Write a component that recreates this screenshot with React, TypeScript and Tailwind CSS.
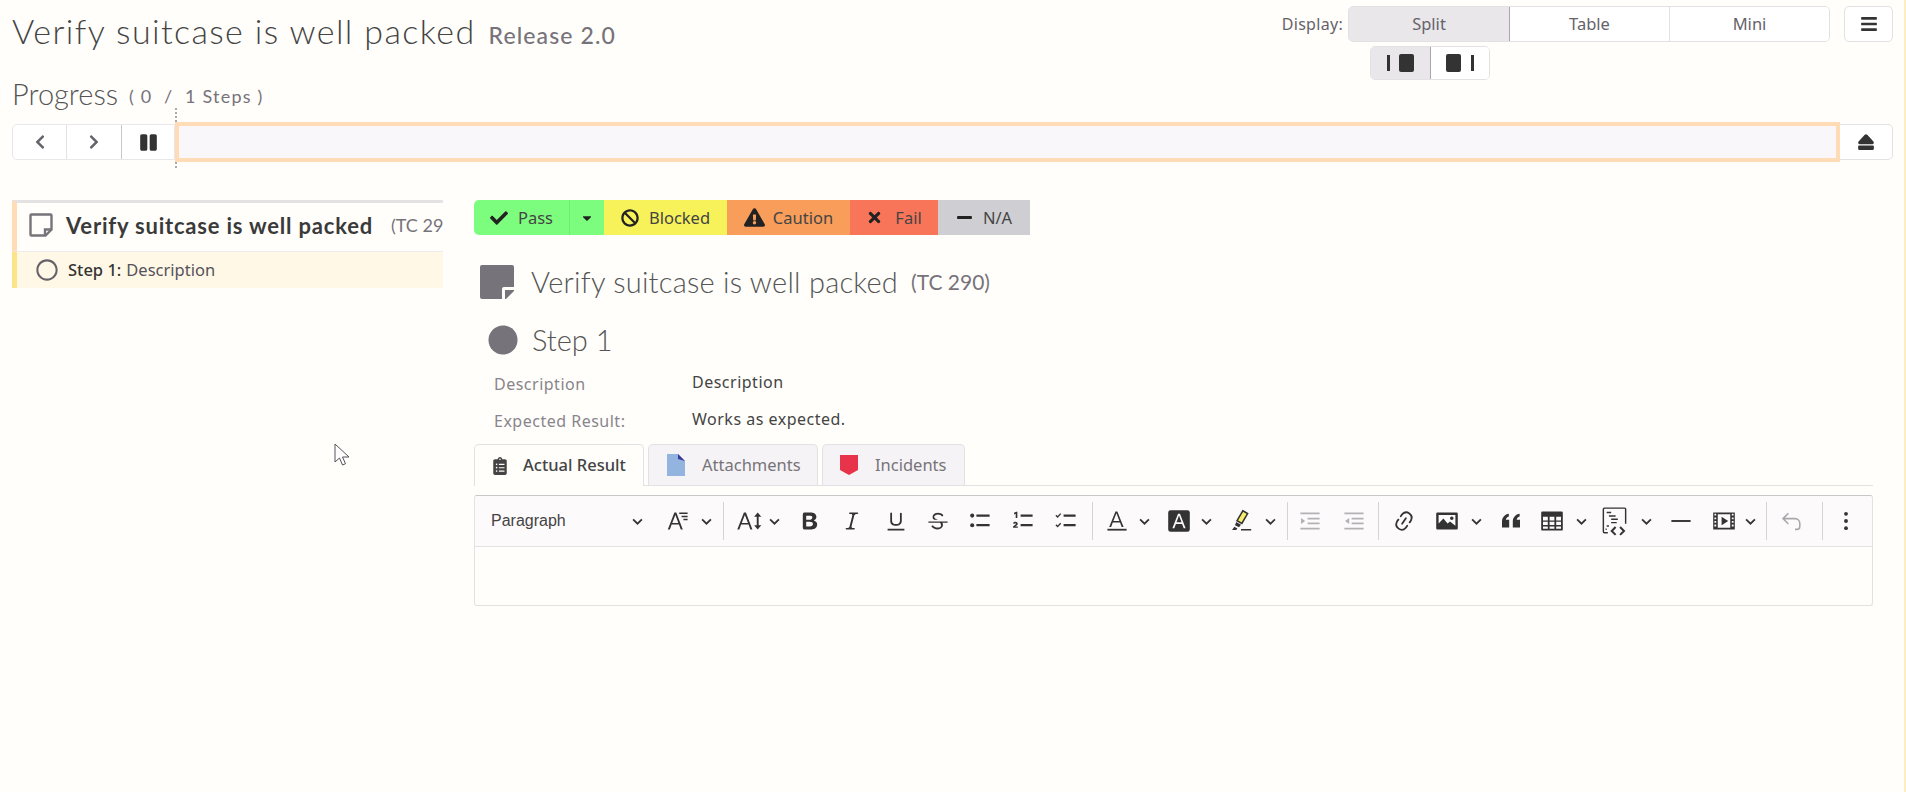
import React from 'react';
import {
  FaBan,
  FaBars,
  FaCaretDown,
  FaCheck,
  FaChevronLeft,
  FaChevronRight,
  FaCircle,
  FaClipboardList,
  FaEject,
  FaExclamationTriangle,
  FaMinus,
  FaPause,
  FaRegCircle,
  FaTimes,
} from 'react-icons/fa';

const heading = "font-['Lato','Liberation_Sans',sans-serif]";
const body = "font-['Noto_Sans','Open_Sans',sans-serif]";

// editor toolbar icon, drawn on a 20x20 box
const Ico = ({ children, className = '' }: { children: React.ReactNode; className?: string }) => (
  <span className={`flex h-5 w-5 shrink-0 items-center justify-center ${className}`}>
    <svg viewBox="0 0 20 20" className="h-6 w-6 shrink-0" fill="currentColor">
      {children}
    </svg>
  </span>
);

const Chev = ({ className = '' }: { className?: string }) => (
  <span className={`flex w-[10px] shrink-0 justify-center ${className}`}>
    <svg viewBox="0 0 10 10" className="h-[11px] w-[11px] shrink-0" fill="none" stroke="#333" strokeWidth="1.6">
      <path d="M1 3l4 4 4-4" />
    </svg>
  </span>
);

const Sep = ({ className = '' }: { className?: string }) => (
  <span className={`h-[38px] w-px shrink-0 bg-[#d5d3d6] ${className}`} />
);

const NoteOutline = () => (
  <svg viewBox="0 0 26 26" className="h-[26px] w-[26px] shrink-0" fill="none" stroke="#77737a" strokeWidth="2.4">
    <path d="M3.5 2.5h19a1 1 0 0 1 1 1v14l-6 6h-14a1 1 0 0 1-1-1v-19a1 1 0 0 1 1-1z" />
    <path d="M23 17.5h-6v6" />
  </svg>
);

const Toolbar = () => (
  <div className="flex h-[51px] items-center rounded-t-[3px] border-b border-[#e3e1e4] bg-[#fdfafc] text-[#333]">
    <div className="flex w-[167px] shrink-0 items-center justify-between pl-4">
      <span className="font-['Liberation_Sans',sans-serif] text-[16px] text-[#444]">Paragraph</span>
      <Chev />
    </div>
    <Ico className="ml-[26px]">
      <path d="M1.5 17l5.5-14h1.6l5.4 14h-1.7l-1.5-4H4.7l-1.5 4zM5.2 11.6h5.1L7.8 4.9z" />
      <path d="M11 3h7v1.2h-7zM13 5.6h5v1.2h-5zM14.5 8.2h3.5v1.2h-3.5z" />
    </Ico>
    <Chev className="ml-[13px]" />
    <Sep className="ml-3" />
    <span className="ml-[14px] flex w-6 shrink-0 items-center justify-center">
      <svg viewBox="0 0 24 20" className="h-[24px] w-[29px] shrink-0" fill="currentColor">
        <path d="M1 17L6.5 3h1.7l5.4 14h-1.7l-1.5-4H4.2l-1.5 4zM4.7 11.6h5.2L7.3 4.9z" />
        <path d="M18 3l3 3.4h-2.2v7.2H21L18 17l-3-3.4h2.2V6.4H15z" />
      </svg>
    </span>
    <Chev className="ml-[7px]" />
    <Ico className="ml-[21px]">
      <path d="M10.187 17H5.773c-.637 0-1.092-.138-1.364-.415-.273-.277-.409-.718-.409-1.323V4.738c0-.617.14-1.062.419-1.332.279-.27.73-.406 1.354-.406h4.68c.69 0 1.288.041 1.793.124.506.083.96.242 1.36.478.341.197.644.447.906.75a3.262 3.262 0 0 1 .808 2.162c0 1.401-.722 2.426-2.167 3.075C15.05 10.175 16 11.315 16 13.01a3.756 3.756 0 0 1-2.034 3.376 5.165 5.165 0 0 1-1.655.473c-.6.094-1.3.141-2.124.141zm-.56-6.37h-2.79v3.866h2.88c1.813 0 2.719-.656 2.719-1.968 0-.672-.24-1.158-.72-1.46-.48-.292-1.177-.438-2.089-.438zM6.837 5.504v3.422h2.456c.668 0 1.184-.063 1.548-.19.364-.126.643-.365.836-.718.15-.247.226-.524.226-.832 0-.658-.235-1.094-.705-1.31-.47-.215-1.186-.323-2.149-.323H6.837z" />
    </Ico>
    <Ico className="ml-[22px]">
      <path d="m9.586 14.633.021.004c-.036.335.095.655.393.962.082.083.173.15.274.201h1.474a.6.6 0 1 1 0 1.2H5.304a.6.6 0 0 1 0-1.2h1.15c.474-.07.809-.182 1.005-.334.157-.122.291-.32.404-.597l2.416-9.55a1.053 1.053 0 0 0-.281-.823 1.12 1.12 0 0 0-.442-.296H8.15a.6.6 0 0 1 0-1.2h6.443a.6.6 0 1 1 0 1.2h-1.195c-.376.056-.65.155-.823.296-.215.175-.423.439-.623.79l-2.366 9.347z" />
    </Ico>
    <Ico className="ml-6">
      <path d="M3 18v-1.5h14V18zm2.2-8V3.6c0-.4.4-.6.8-.6.3 0 .7.2.7.6v6.2c0 2 1.3 2.8 3.2 2.8 1.9 0 3.4-.9 3.4-2.9V3.6c0-.3.4-.5.8-.5.3 0 .7.2.7.5V10c0 2.7-2.2 4-4.9 4-2.6 0-4.7-1.2-4.7-4z" />
    </Ico>
    <Ico className="ml-[22px]">
      <path d="M7 16.4c-.8-.4-1.5-.9-2.2-1.5a.6.6 0 0 1-.2-.5l.3-.6h1c1 1.2 2.1 1.7 3.7 1.7 1 0 1.8-.3 2.3-.6.6-.4.6-1.2.6-1.3.2-1.2-.9-2.1-.9-2.1h2.1c.3.7.4 1.2.4 1.7v.8l-.6 1.2c-.6.8-1.1 1-1.6 1.2a6 6 0 0 1-2.4.6c-1 0-1.9-.3-2.5-.6zM6.8 9 6 8.3c-.4-.5-.5-.8-.5-1.6 0-.7.1-1.3.5-1.8.4-.6 1-1 1.6-1.3a6.3 6.3 0 0 1 4.7 0 4 4 0 0 1 1.7 1l.3.7c0 .1.2.4-.2.7-.4.2-.9.1-1 0a3 3 0 0 0-1.2-1c-.4-.2-1-.3-2-.4-.7 0-1.4.2-2 .6-.8.6-1 .8-1 1.5 0 .8.5 1 1.2 1.5.6.3 1.1.4 1.9.7H6.8zM2 11v-.6h16v1H2z" />
    </Ico>
    <Ico className="ml-[22px]">
      <circle cx="3.5" cy="5.5" r="1.7" />
      <circle cx="3.5" cy="13.5" r="1.7" />
      <path d="M7 4.6h11v1.800H7zM7 12.600h11v1.800H7z" />
    </Ico>
    <Ico className="ml-[23px]">
      <path d="M2.500 3.200l1.800-1h1v5.300H3.900V3.900l-1.200.6zM1.700 11.800c.4-.8 1.200-1.100 2-1.100 1.100 0 1.900.6 1.900 1.500 0 .9-.8 1.500-2 2.300h2.100v1.100H1.700v-1c1.600-1.200 2.400-1.700 2.400-2.300 0-.3-.2-.5-.6-.5-.3 0-.6.200-.8.600z" />
      <path d="M8 4.600h10v1.800H8zM8 12.600h10v1.800H8z" />
    </Ico>
    <Ico className="ml-[23px]">
      <path d="M2 4.800l1 1 2.200-2.300.8.700-3 3.200-1.800-1.800zM2 12.800l1 1 2.200-2.300.8.700-3 3.200-1.800-1.800z" />
      <path d="M8 4.600h10v1.800H8zM8 12.600h10v1.800H8z" />
    </Ico>
    <Sep className="ml-4" />
    <Ico className="ml-[14px]">
      <path d="M3.500 15l5.200-13h1.600l5.200 13h-1.600l-1.400-3.800H6.500L5.100 15zM7 9.900h5L9.500 3.500z" />
      <path d="M2 16.500h16V18H2z" />
    </Ico>
    <Chev className="ml-3" />
    <Ico className="ml-5">
      <path
        fillRule="evenodd"
        d="M3 1h14a2 2 0 0 1 2 2v14a2 2 0 0 1-2 2H3a2 2 0 0 1-2-2V3a2 2 0 0 1 2-2zM4.500 16h1.600l1.300-3.600h5.200L13.900 16h1.600L10.800 4H9.200zM7.900 11.100l2.100-5.600 2.100 5.600z"
      />
    </Ico>
    <Chev className="ml-3" />
    <Ico className="ml-5">
      <path fill="#f6ec6e" stroke="#333" strokeWidth="1.300" d="M11.500 1.500l4 2.300-4.800 8.200-4-2.300z" />
      <path d="M6 10.800l4 2.300-1.700 2.200-3.300-1.800zM4.500 14.800l2.500 1.400-1 1.300H2.500zM10 16.600h8.500V18H10z" />
    </Ico>
    <Chev className="ml-[14px]" />
    <Sep className="ml-3" />
    <Ico className="ml-3 text-[#b3b1b4]">
      <path d="M2 3h16v1.400H2zM8 7.300h10v1.400H8zM8 11.300h10v1.400H8zM2 15.600h16V17H2zM2.500 7.500l3.500 2.500-3.500 2.500z" />
    </Ico>
    <Ico className="ml-6 text-[#b3b1b4]">
      <path d="M2 3h16v1.400H2zM8 7.300h10v1.400H8zM8 11.300h10v1.400H8zM2 15.600h16V17H2zM6 7.500L2.500 10 6 12.500z" />
    </Ico>
    <Sep className="ml-[14px]" />
    <Ico className="ml-[15px]">
      <path d="m11.077 15 .991-1.416a.75.75 0 1 1 1.229.86l-1.148 1.64a.748.748 0 0 1-.217.206 5.251 5.251 0 0 1-8.503-5.955.741.741 0 0 1 .12-.274l1.147-1.639a.75.75 0 1 1 1.228.86L4.933 10.700l.006.003a3.750 3.750 0 0 0 6.132 4.294l.006.004zm5.494-5.335a.748.748 0 0 1-.12.274l-1.147 1.639a.75.75 0 1 1-1.228-.86l.86-1.230a3.750 3.750 0 0 0-6.144-4.301l-.86 1.229a.75.75 0 0 1-1.229-.86l1.148-1.640a.748.748 0 0 1 .217-.206 5.251 5.251 0 0 1 8.503 5.955zm-4.563-2.532a.75.75 0 0 1 .184 1.045l-3.155 4.505a.75.75 0 1 1-1.229-.86l3.155-4.506a.75.75 0 0 1 1.045-.184z" />
    </Ico>
    <Ico className="ml-[23px]">
      <path
        fillRule="evenodd"
        d="M2 3h16a1 1 0 0 1 1 1v12a1 1 0 0 1-1 1H2a1 1 0 0 1-1-1V4a1 1 0 0 1 1-1zm1 2v7l4-4 3.500 4 2-1.500L17 14V5zM14 6.200a1.500 1.500 0 1 1 0 3 1.500 1.500 0 0 1 0-3z"
      />
    </Ico>
    <Chev className="ml-[14px]" />
    <Ico className="ml-5">
      <path d="M2.500 10c.3-3.200 2.400-5.500 5.700-6v2.200c-1.500.4-2.300 1.300-2.500 2.800h2.800v6.500h-6zM11.500 10c.3-3.200 2.400-5.500 5.700-6v2.200c-1.500.4-2.300 1.300-2.500 2.800h2.800v6.500h-6z" />
    </Ico>
    <Ico className="ml-[21px]">
      <path
        fillRule="evenodd"
        d="M2 2h16a1 1 0 0 1 1 1v14a1 1 0 0 1-1 1H2a1 1 0 0 1-1-1V3a1 1 0 0 1 1-1zm.500 4.500v3h4v-3zm5.500 0v3h4v-3zm5.500 0v3h4v-3zm-11 4.200v2.600h4v-2.600zm5.500 0v2.600h4v-2.600zm5.500 0v2.600h4v-2.600zM2.500 14.500v2h4v-2zm5.500 0v2h4v-2zm5.500 0v2h4v-2z"
      />
    </Ico>
    <Chev className="ml-[14px]" />
    <span className="ml-[18px] flex h-5 w-5 shrink-0 items-center justify-center">
      <svg viewBox="0 0 24 26" className="h-[29px] w-[27px] shrink-0" fill="none" stroke="#333" strokeWidth="1.300">
        <path d="M6 23H3a1 1 0 0 1-1-1V2a1 1 0 0 1 1-1h18a1 1 0 0 1 1 1v13" />
        <path d="M5 5h4M7 8h6M9 11h6M9 14h5M7 17H5M5 20H4" />
        <path strokeWidth="1.800" d="M13 18l-3.500 3.500L13 25M17 18l3.500 3.500L17 25" />
      </svg>
    </span>
    <Chev className="ml-[17px]" />
    <Ico className="ml-5">
      <path d="M2 9.200h16v1.600H2z" />
    </Ico>
    <Ico className="ml-[23px]">
      <path
        fillRule="evenodd"
        d="M1 3h18v14H1zM2 4v1.500h1.500V4zm0 3v1.500h1.500V7zm0 3v1.500h1.500V10zm0 3v1.500h1.500V13zm14.500-9v1.500H18V4zm0 3v1.500H18V7zm0 3v1.500H18V10zm0 3v1.500H18V13zM4.800 4.300v11.400h10.400V4.300zM8 6.500l5.500 3.500L8 13.500z"
      />
    </Ico>
    <Chev className="ml-[11px]" />
    <Sep className="ml-[11px]" />
    <Ico className="ml-[15px] text-[#a9a7aa]">
      <path
        fill="none"
        stroke="currentColor"
        strokeWidth="1.300"
        d="M7 3.500L2.500 8 7 12.500M2.500 8h10a4 4 0 0 1 4 4v2.500a2.500 2.500 0 0 1-2.500 2.500h-1.500"
      />
    </Ico>
    <Sep className="ml-5" />
    <Ico className="ml-[13px]">
      <circle cx="10" cy="4" r="1.600" />
      <circle cx="10" cy="10" r="1.600" />
      <circle cx="10" cy="16" r="1.600" />
    </Ico>
  </div>
);

export default function App() {
  return (
    <div className={`relative min-h-[792px] overflow-hidden border-r-2 border-[#fdeec2] bg-[#fffefb] pl-3 pr-[11px] text-[#333] ${body}`}>
      {/* Header */}
      <div className="flex h-[122px] justify-between">
        <div>
          <h1 className={`mt-[9px] flex items-baseline text-[#444] ${heading}`}>
            <span className="text-[34px] font-light leading-[44px] tracking-[1.4px]">Verify suitcase is well packed</span>
            <span className="ml-[13px] text-[23px] font-medium tracking-[1.1px] text-[#77737a]">Release 2.0</span>
          </h1>
          <div className={`mt-[24px] flex items-baseline ${heading}`}>
            <span className="text-[29px] font-light leading-[34px] text-[#555]">Progress</span>
            <span className="ml-[11px] -translate-y-[2px] text-[18px] tracking-[1.2px] text-[#77737a]">( 0 &nbsp;/ &nbsp;1 Steps )</span>
          </div>
        </div>
        <div className="flex flex-col items-end pt-[6px]">
          <div className="flex items-center">
            <span className="mr-[5px] text-[16px] tracking-[0.3px] text-[#66626a]">Display:</span>
            <div className="flex h-[36px] w-[482px] overflow-hidden rounded-[5px] border border-[#e3e1e4] text-[16.5px] text-[#66626a]">
              <span className="flex w-[161px] items-center justify-center border-r border-[#a9a7aa] bg-[#e9e7ea]">Split</span>
              <span className="flex w-[160px] items-center justify-center border-r border-[#e3e1e4] bg-white">Table</span>
              <span className="flex flex-1 items-center justify-center bg-white">Mini</span>
            </div>
            <span className="ml-[14px] flex h-[36px] w-[49px] items-center justify-center rounded-[5px] border border-[#e3e1e4] bg-white">
              <FaBars className="h-[18px] w-[18px]" />
            </span>
          </div>
          <div className="mr-[403px] mt-[4px] flex h-[34px] w-[120px] overflow-hidden rounded-[5px] border border-[#e3e1e4]">
            <span className="flex w-[60px] items-center justify-center gap-[9px] border-r border-[#a9a7aa] bg-[#e9e7ea]">
              <span className="h-[16px] w-[3px] bg-[#333]" />
              <span className="h-[18px] w-[15px] rounded-[2px] bg-[#333]" />
            </span>
            <span className="flex flex-1 items-center justify-center gap-[10px] bg-white">
              <span className="h-[18px] w-[15px] rounded-[2px] bg-[#333]" />
              <span className="h-[16px] w-[3px] bg-[#333]" />
            </span>
          </div>
        </div>
      </div>

      {/* Progress bar */}
      <div className="flex h-[40px] items-center">
        <div className="flex h-[36px] w-[163px] shrink-0 rounded-l-[5px] border border-[#e9e7ea] bg-white text-[#66626a]">
          <span className="flex w-[54px] items-center justify-center border-r border-[#e3e1e4]">
            <FaChevronLeft className="h-[16px] w-[16px]" />
          </span>
          <span className="flex w-[55px] items-center justify-center border-r border-[#c9c7ca]">
            <FaChevronRight className="h-[16px] w-[16px]" />
          </span>
          <span className="flex flex-1 items-center justify-center text-[#333]">
            <FaPause className="h-[19px] w-[19px]" />
          </span>
        </div>
        <div className="relative h-[40px] w-[1665px] shrink-0 border-4 border-[#ffdcb5] bg-[#faf7fb]">
          <span className="absolute -left-[4px] -top-[18px] h-[14px] border-l-2 border-dotted border-[#aaa]" />
          <span className="absolute -bottom-[10px] -left-[4px] h-[6px] border-l-2 border-dotted border-[#aaa]" />
        </div>
        <span className="flex h-[36px] flex-1 items-center justify-center rounded-r-[5px] border border-l-0 border-[#e3e1e4] bg-white">
          <FaEject className="h-[18px] w-[18px]" />
        </span>
      </div>

      {/* Main */}
      <div className="mt-[38px] flex items-start">
        {/* Tree */}
        <div className="w-[431px] shrink-0 overflow-hidden">
          <div className="flex h-[52px] items-center whitespace-nowrap border-b border-t-[3px] border-l-[5px] border-b-[#eeecea] border-l-[#ffdcb5] border-t-[#e5e2e3] bg-[#fffefb] pb-[4px] pl-[11px]">
            <NoteOutline />
            <span className={`ml-[12px] shrink-0 text-[22px] font-bold tracking-[0.8px] text-[#3a3a3a] ${heading}`}>Verify suitcase is well packed</span>
            <span className={`ml-[18px] shrink-0 text-[18px] text-[#77737a] ${heading}`}>(TC 290)</span>
          </div>
          <div className="flex h-[36px] items-center border-l-[5px] border-[#fbe38a] bg-[#fff8e6] pl-[19px] text-[16.5px]">
            <FaRegCircle className="h-[22px] w-[22px] text-[#66626a]" />
            <span className="ml-[10px] font-medium text-[#333]">Step 1:</span>
            <span className="ml-[5px] text-[#55525a]">Description</span>
          </div>
        </div>

        {/* Test run detail */}
        <div className="ml-[31px] w-[1399px] shrink-0">
          <div className="flex h-[35px] overflow-hidden rounded-[5px] text-[16.5px] text-[#444]">
            <span className="flex w-[95px] items-center justify-center gap-[10px] bg-[#7dfd7e]">
              <FaCheck className="h-[18px] w-[18px] text-[#222]" />
              <span className="translate-y-px">Pass</span>
            </span>
            <span className="flex w-[35px] items-center justify-center border-l border-[#74ea75] bg-[#7dfd7e]">
              <FaCaretDown className="h-[14px] w-[14px] text-[#222]" />
            </span>
            <span className="flex w-[123px] items-center justify-center gap-[10px] bg-[#f8f25a]">
              <FaBan className="h-[18px] w-[18px] text-[#222]" />
              <span className="translate-y-px">Blocked</span>
            </span>
            <span className="flex w-[123px] items-center justify-center gap-[8px] bg-[#f89d5a]">
              <FaExclamationTriangle className="h-[21px] w-[21px] text-[#222]" />
              <span className="translate-y-px">Caution</span>
            </span>
            <span className="flex w-[88px] items-center justify-center gap-[12px] bg-[#f97559]">
              <FaTimes className="h-[17px] w-[17px] text-[#222]" />
              <span className="translate-y-px">Fail</span>
            </span>
            <span className="flex w-[92px] items-center justify-center gap-[10px] bg-[#cfcfd3]">
              <FaMinus className="h-[17px] w-[17px] text-[#222]" />
              <span className="translate-y-px">N/A</span>
            </span>
          </div>

          <div className="mt-[27px] flex h-[40px] items-center pl-[6px]">
            <svg viewBox="0 0 34 34" className="h-[34px] w-[34px] shrink-0" fill="#77737a">
              <path d="M2 0h30a2 2 0 0 1 2 2v20H24a2 2 0 0 0-2 2v10H2a2 2 0 0 1-2-2V2a2 2 0 0 1 2-2z" />
              <path d="M34 25v1l-8 8h-1v-9z" />
            </svg>
            <span className={`ml-[17px] text-[29px] font-light tracking-[0.25px] text-[#555] ${heading}`}>Verify suitcase is well packed</span>
            <span className={`ml-[13px] text-[21px] text-[#77737a] ${heading}`}>(TC 290)</span>
          </div>

          <div className="mt-[20px] flex h-[36px] items-center pl-[14px]">
            <FaCircle className="h-[30px] w-[30px] text-[#77737a]" />
            <span className={`ml-[14px] text-[29px] font-light text-[#555] ${heading}`}>Step 1</span>
          </div>

          <div className="mt-[13px] grid grid-cols-[198px_1fr] gap-y-[15px] pl-[20px] text-[16px] leading-[22px] tracking-[0.5px]">
            <span className="translate-y-[2px] text-[#88858b]">Description</span>
            <span className="text-[#444]">Description</span>
            <span className="translate-y-[2px] text-[#88858b]">Expected Result:</span>
            <span className="text-[#444]">Works as expected.</span>
          </div>

          {/* Tabs */}
          <div className="mt-[15px] flex h-[41px] items-end gap-[4px] border-b border-[#e3e1e4] text-[16.5px]">
            <span className="-mb-px flex h-[42px] w-[170px] items-center rounded-t-[5px] border border-b-0 border-[#e3e1e4] bg-[#fffefb] pl-[16px] font-medium text-[#444]">
              <FaClipboardList className="h-[18px] w-[18px] text-[#444]" />
              <span className="ml-[14px]">Actual Result</span>
            </span>
            <span className="flex h-[41px] w-[170px] items-center rounded-t-[5px] border border-b-0 border-[#e3e1e4] bg-[#f5f3f5] pl-[18px] text-[#77737a]">
              <svg viewBox="0 0 18 22" className="h-[22px] w-[18px] shrink-0">
                <path d="M0 0h11l7 7v15H0z" fill="#94b4e0" />
                <path d="M11 0l7 7-7-2z" fill="#3a3a9a" />
              </svg>
              <span className="ml-[17px]">Attachments</span>
            </span>
            <span className="flex h-[41px] w-[143px] items-center rounded-t-[5px] border border-b-0 border-[#e3e1e4] bg-[#f5f3f5] pl-[17px] text-[#77737a]">
              <svg viewBox="0 0 18 20" className="h-[20px] w-[18px] shrink-0">
                <path d="M0 0h18v15l-9 5-9-5z" fill="#e8344a" />
              </svg>
              <span className="ml-[17px]">Incidents</span>
            </span>
          </div>

          {/* Editor */}
          <div className="mt-[9px] rounded-[3px] border border-[#e3e1e4] border-t-[#c9c7ca]">
            <Toolbar />
            <div className="h-[58px]" />
          </div>
        </div>
      </div>

      {/* Mouse pointer */}
      <svg viewBox="0 0 16 24" className="absolute left-[334px] top-[443px] h-[24px] w-[16px]" fill="#fff" stroke="#55525a" strokeWidth="1">
        <path d="M1 1v18l4.500-4 3 7 3-1.300-3-6.700H15z" />
      </svg>
    </div>
  );
}
